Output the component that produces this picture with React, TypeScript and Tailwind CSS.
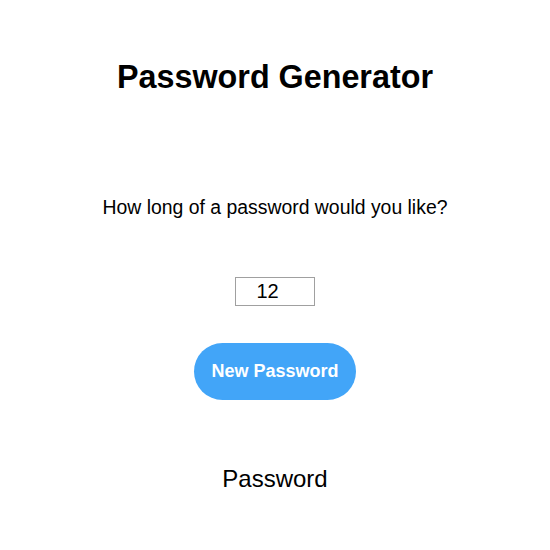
import { useState } from 'react'

export default function App() {
  const [length, setLength] = useState(12)

  return (
    <div className="min-h-[550px] w-full bg-white flex flex-col items-center text-black font-['Liberation_Sans',Arial,sans-serif]">
      <h1 className="mt-[61px] text-[32.3px] leading-[32px] font-bold">Password Generator</h1>

      <p className="mt-[104px] text-[19.4px] leading-[20px]">How long of a password would you like?</p>

      <input
        type="number"
        value={length}
        onChange={e => setLength(Number(e.target.value))}
        className="mt-[60px] w-[80px] h-[29px] border border-[#a0a0a0] text-center text-[20px] leading-[20px] outline-none"
      />

      <button className="mt-[37px] h-[57px] px-[17px] rounded-full bg-[#42a5f8] text-white text-[18px] font-bold">
        New Password
      </button>

      <p className="mt-[67px] text-[24px] leading-[24px]">Password</p>
    </div>
  )
}
